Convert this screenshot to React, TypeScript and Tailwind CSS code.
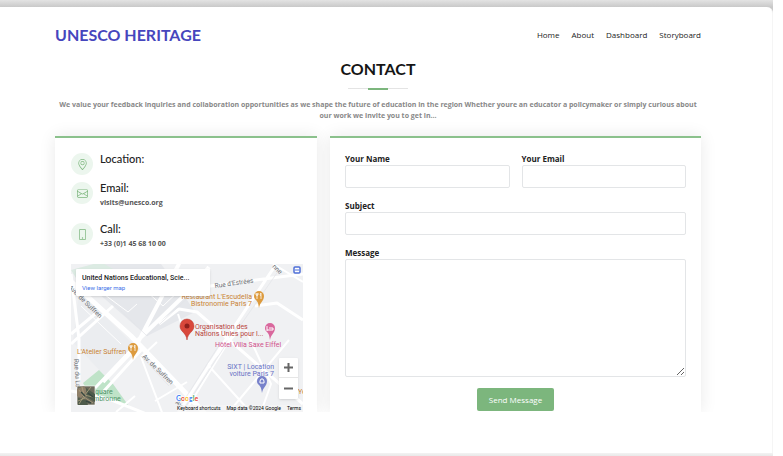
import type { ReactNode } from "react";
import { BsEnvelope, BsGeoAlt, BsPhone } from "react-icons/bs";

const navLinks = ["Home", "About", "Dashboard", "Storyboard"];

function InfoItem({ icon, title, children }: { icon: ReactNode; title: string; children?: ReactNode }) {
  return (
    <div className="flex gap-[7px]">
      <span className="flex size-[22px] shrink-0 items-center justify-center rounded-full bg-[#ecf6ee] text-[11px] text-[#7cb67d]">
        {icon}
      </span>
      <div>
        <h3 className="font-['Lato','Open_Sans',sans-serif] text-[11px] leading-[12px] font-medium text-[#222222]">{title}</h3>
        {children}
      </div>
    </div>
  );
}

function Field({ id, label, type = "text" }: { id: string; label: string; type?: string }) {
  return (
    <div>
      <label htmlFor={id} className="block text-[8px] leading-[13px] font-bold text-[#222222]">
        {label}
      </label>
      <input id={id} type={type} className="block h-[23px] w-full rounded-[2px] border border-[#e3e5e7] bg-white px-2 text-[8px] outline-none" />
    </div>
  );
}

function Pin({ x, y, color, children }: { x: number; y: number; color: string; children?: ReactNode }) {
  return (
    <g transform={`translate(${x} ${y})`}>
      <path d="M0 9C-1-1-5 2-5-3A5 5 0 0 1 5-3C5 2 1 3 0 9Z" fill={color} />
      {children}
    </g>
  );
}

function Fork() {
  return <path d="M-2-6v3m-1-3v2h2v-2m-1 2v4M2 0v-6c-1 0-1 3 0 3" stroke="white" strokeWidth=".8" fill="none" />;
}

function MapDrawing() {
  return (
    <svg viewBox="0 0 232 148" preserveAspectRatio="xMidYMid slice" className="block h-full w-full" role="img" aria-label="Map of the area">
      <rect width="232" height="148" fill="#f0f1f3" />
      <path d="M22 0L90 0 112 30 124 48 76 72 26 28Z" fill="#e5e7eb" />
      <path d="M8 26L64 82 34 112 2 78Z" fill="#ebedf0" />
      <path d="M0 6L30-2 42 5 10 22Z" fill="#dcebe3" />
      <path d="M12 119L28 106 42 120 60 145 42 137 18 130Z" fill="#bfe3c8" />
      <g stroke="#ffffff" fill="none" strokeLinejoin="round">
        <path d="M-4 14L60 72 108 122 136 152" strokeWidth="5" />
        <path d="M110-4L64 84 32 118M66 77L120 25 138 3" strokeWidth="4" />
        <path d="M0 70L24 50M0 80L42 42M0 10L8 75 8 118" strokeWidth="3" />
        <path d="M0 127L38 135 78 151M64 82L24 124M72 84L32 128" strokeWidth="3" />
        <path d="M124 24L232 10M88 60L108 45 126 48 232 140M232 56L206 39 184 42M204 2L157 72 108 148" strokeWidth="3" />
        <path d="M162 70L114 148M137 101L174 142M175 66L200 120 190 148M137 101L172 62M158 148L218 76" strokeWidth="2" />
        <path d="M70 93L92 151M70 93L86 78M84 137L116 118M45 148L64 132M107 50L111 62M202 0L232 18" strokeWidth="2" />
        <path d="M30 28L57 48 66 40M76 28L92 42 111 24M10 42L50 80" strokeWidth="1" />
      </g>
      <g stroke="#e2e4e8" fill="none" strokeWidth=".7">
        <path d="M38 35L76 72 123 28M70 92L98 122M112 138L150 78M115 142L154 82M208 6L169 62" />
      </g>
      <g className="font-['Roboto','Open_Sans',sans-serif]" fontSize="7">
        <g fill="#6b6f73" fontSize="6.5">
          <text transform="translate(-3 24) rotate(44)">Ave. de Suffren</text>
          <text transform="translate(71 93) rotate(44)">Av. de Suffren</text>
          <text transform="translate(104 139) rotate(44)">Av.</text>
          <text transform="translate(3 95) rotate(86)">Rue du La</text>
          <text transform="translate(144 24) rotate(-8)">Rue d'Estrées</text>
          <text transform="translate(201 3) rotate(44)">nne</text>
        </g>
        <g fill="#c98232">
          <text x="181" y="35" textAnchor="end">Restaurant L'Escudella</text>
          <text x="181" y="42" textAnchor="end">Bistronomie Paris 7</text>
          <text x="6" y="90">L'Atelier Suffren</text>
          <text x="227" y="130">Yo</text>
        </g>
        <g fill="#b8443c">
          <text x="124" y="65">Organisation des</text>
          <text x="124" y="72">Nations Unies pour l...</text>
        </g>
        <text x="144" y="83" fill="#d0528c">Hôtel Villa Saxe Eiffel</text>
        <g fill="#6670c4">
          <text x="203" y="105" textAnchor="end">SIXT | Location</text>
          <text x="203" y="112" textAnchor="end">voiture Paris 7</text>
        </g>
        <g fill="#4f9467">
          <text x="24" y="130">quare</text>
          <text x="22" y="137">mbronne</text>
        </g>
      </g>
      <Pin x={188} y={35} color="#dd9b3e"><Fork /></Pin>
      <Pin x={62} y={87} color="#dd9b3e"><Fork /></Pin>
      <Pin x={199} y={67} color="#d9689d">
        <path d="M-3-5V0M-3-1H3V-3H-1" stroke="white" fill="none" />
      </Pin>
      <Pin x={191} y={120} color="#7882cb">
        <path d="M-2-3l1-2h2l1 2v2h-4z" fill="none" stroke="white" />
      </Pin>
      <path d="M116 76C115 68 109 68 109 62A7 7 0 0 1 123 62C123 68 117 68 116 76Z" fill="#d9483b" stroke="#b93229" strokeWidth=".5" />
      <circle cx="116" cy="62" r="2.5" fill="#8f211c" />
      <rect x="223" y="3" width="6" height="6" rx="1" fill="#fff" stroke="#4e6fd8" strokeWidth="1.5" />
      <path d="M224 6h4" stroke="#4e6fd8" />
      <g>
        <rect x="6" y="122" width="18" height="19" fill="#6d6b5c" stroke="#ffffff" strokeWidth=".6" />
        <path d="M6 125l7-3 3 5-6 7-4-2z" fill="#8f806a" />
        <path d="M15 124l9 6v8l-8-5zM7 134l8 2 2 5H7z" fill="#4e5b4b" />
        <path d="M8 126l5 7 9 6M20 123l-7 9-5 8M11 123l2 8 9 2M7 137l7-3" stroke="#b0a37f" strokeWidth=".8" fill="none" />
        <path d="M10 128l4 4M17 129l5 4M15 137l5 2" stroke="#374740" strokeWidth="1.5" />
      </g>
      <text x="105" y="137" fontSize="7" stroke="#fff" strokeWidth="1.5" paintOrder="stroke" className="font-['Lato',sans-serif] font-bold">
        <tspan fill="#4285f4">G</tspan><tspan fill="#ea4335">o</tspan><tspan fill="#fbbc05">o</tspan><tspan fill="#4285f4">g</tspan><tspan fill="#34a853">l</tspan><tspan fill="#ea4335">e</tspan>
      </text>
    </svg>
  );
}

function LocationMap() {
  return (
    <div className="relative h-[148px] overflow-hidden">
      <MapDrawing />
      <div className="absolute top-[5px] left-[5px] w-[134px] rounded-[1px] bg-white px-[6px] pt-[4px] pb-[4px] font-['Roboto','Open_Sans',sans-serif] shadow">
        <p className="truncate text-[7px] leading-[10px] font-medium text-[#222222]">United Nations Educational, Scie...</p>
        <a href="#map" className="block text-[6px] leading-[9px] text-[#3b6fe8]">View larger map</a>
      </div>
      <div className="absolute right-[5px] bottom-[13px] flex w-[19px] flex-col rounded-[1px] bg-white shadow">
        <button type="button" aria-label="Zoom in" className="flex h-[20px] items-center justify-center border-b border-[#e6e6e6]">
          <svg viewBox="0 0 9 9" className="size-[9px]"><path d="M0 4.5h9M4.5 0v9" stroke="#666666" strokeWidth="2" /></svg>
        </button>
        <button type="button" aria-label="Zoom out" className="flex h-[21px] items-center justify-center">
          <svg viewBox="0 0 9 9" className="size-[9px]"><path d="M0 4.5h9" stroke="#666666" strokeWidth="2" /></svg>
        </button>
      </div>
      <div className="absolute right-0 bottom-0 flex gap-[6px] bg-[#f5f5f5]/70 pr-[2px] font-['Roboto','Open_Sans',sans-serif] text-[5px] leading-[7px] text-black">
        <button type="button">Keyboard shortcuts</button>
        <span>Map data ©2024 Google</span>
        <a href="#terms">Terms</a>
      </div>
    </div>
  );
}

export default function App() {
  return (
    <div className="bg-white pr-[10px] font-['Open_Sans','Noto_Sans',sans-serif]">
      <div className="bg-linear-to-b from-[#e3e3e3] to-[#c9c9c9] to-[7px] pt-[7px]">
        <div className="rounded-tr-[6px] border-r border-[#f5f5f5] bg-white pb-[41px]">
          <header className="flex items-center justify-between pt-[18px] pr-[71px] pl-[55px]">
            <a href="#home" className="font-['Lato','Open_Sans',sans-serif] text-[16px] leading-[20px] font-bold text-[#4646bd]">UNESCO HERITAGE</a>
            <nav className="flex gap-[12px] text-[8px] leading-[18px] text-[#222222]">
              {navLinks.map((link) => (
                <a key={link} href={`#${link.toLowerCase()}`}>{link}</a>
              ))}
            </nav>
          </header>

          <main className="overflow-hidden pr-[71px] pl-[55px]">
            <div className="pt-[14px] pb-[15px] text-center">
              <h2 className="font-['Lato','Open_Sans',sans-serif] text-[16px] leading-[20px] font-bold text-[#151515]">CONTACT</h2>
              <div className="mx-auto mt-[9px] flex h-[2px] w-[60px] items-center justify-center bg-linear-to-b from-[#e4e4e4] from-50% to-transparent to-50%">
                <span className="h-[2px] w-[20px] bg-[#7cb67d]" />
              </div>
              <p className="mt-[9px] text-[7px] leading-[11px] font-bold text-[#888888]">
                We value your feedback inquiries and collaboration opportunities as we shape the future of education in the region Whether youre an educator a policymaker or simply curious about our work we invite you to get in...
              </p>
            </div>

            <div className="grid grid-cols-[262fr_371fr] gap-[13px]">
              <section className="border-t-2 border-[#8bc18c] bg-white pt-[15px] pr-[14px] pl-[16px] shadow-[0_0_16px_rgba(0,0,0,0.09)]">
                <InfoItem icon={<BsGeoAlt />} title="Location:" />
                <div className="mt-[7px]">
                  <InfoItem icon={<BsEnvelope />} title="Email:">
                    <a href="mailto:visits@unesco.org" className="mt-[3px] block text-[7px] leading-[11px] font-bold text-[#555555]">visits@unesco.org</a>
                  </InfoItem>
                </div>
                <div className="mt-[15px]">
                  <InfoItem icon={<BsPhone />} title="Call:">
                    <a href="tel:+33145681000" className="mt-[3px] block text-[7px] leading-[11px] font-bold text-[#555555]">+33 (0)1 45 68 10 00</a>
                  </InfoItem>
                </div>
                <div className="mt-[15px]">
                  <LocationMap />
                </div>
              </section>

              <form className="flex flex-col gap-[11px] border-t-2 border-[#8bc18c] bg-white px-[15px] pt-[14px] shadow-[0_0_16px_rgba(0,0,0,0.09)]">
                <div className="grid grid-cols-2 gap-[12px]">
                  <Field id="name" label="Your Name" />
                  <Field id="email" label="Your Email" type="email" />
                </div>
                <Field id="subject" label="Subject" />
                <div>
                  <label htmlFor="message" className="block text-[8px] leading-[13px] font-bold text-[#222222]">Message</label>
                  <textarea id="message" className="block h-[118px] w-full resize rounded-[2px] border border-[#e3e5e7] bg-white p-2 text-[8px] outline-none" />
                </div>
                <button type="submit" className="h-[23px] self-center rounded-[2px] bg-[#7cb67d] px-[12px] text-[8px] text-white">Send Message</button>
              </form>
            </div>
          </main>
        </div>
      </div>
      <div className="h-[3px] bg-linear-to-b from-[#f3f3f3] to-[#e8e8e8]" />
    </div>
  );
}
